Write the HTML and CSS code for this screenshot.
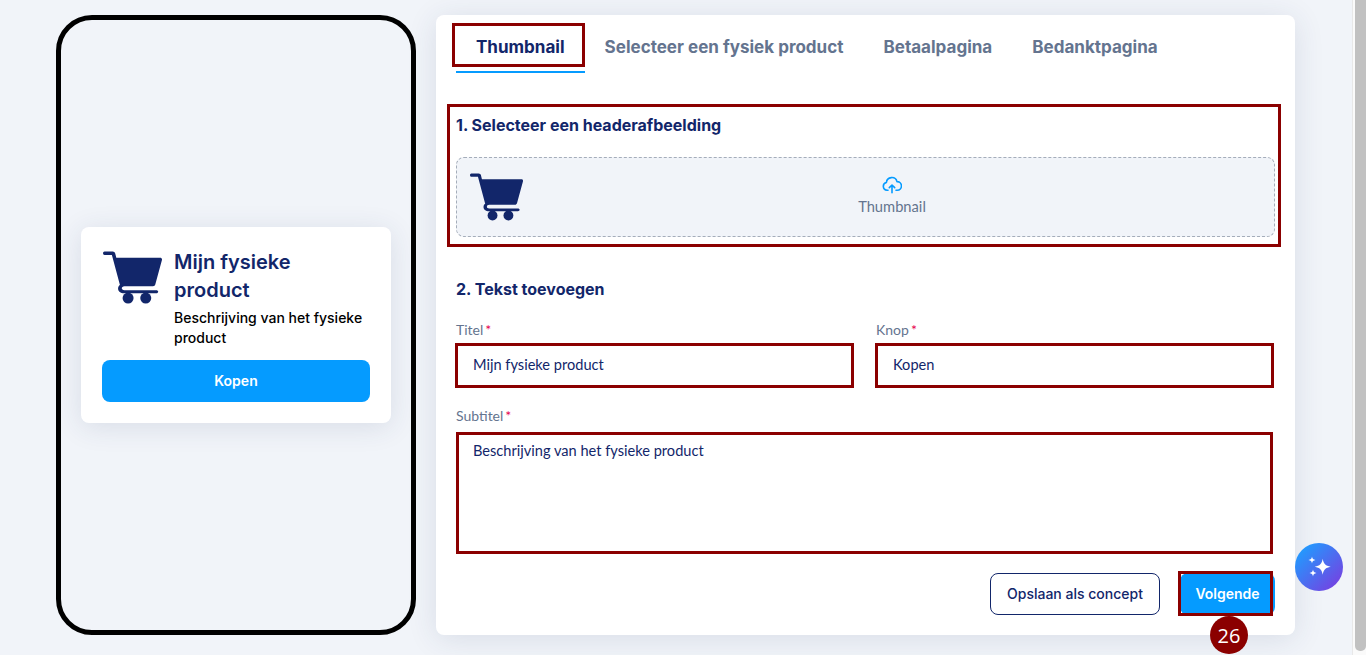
FILE: index.html
```html
<!DOCTYPE html>
<html lang="nl">
<head>
<meta charset="utf-8">
<title>Thumbnail</title>
<link rel="stylesheet" href="styles.css">
</head>
<body>
<svg class="defs" width="0" height="0" aria-hidden="true">
  <symbol id="cart" viewBox="0 0 60 54">
    <path d="M1.500 .5h8.300c1.300 0 2.300.8 2.600 2l1.100 4.500h44.800c1.200 0 2 1 1.700 2.200l-6.800 25c-.3 1-1.200 1.700-2.300 1.700H21l.8 0c-1.800 0-2.700 1-2.700 2.100 0 1 .9 1.900 2.700 1.900h32.400c1.100 0 2 .7 2 1.600s-.9 1.600-2 1.600H21.500c-3.800 0-6.200-2.100-6.200-4.900 0-1.500.7-2.800 1.900-3.500L9 4H1.500C.6 4 0 3.200 0 2.300S.6.500 1.500.5z" fill="#12266a"/>
    <circle cx="25.500" cy="48" r="5.600" fill="#12266a"/>
    <circle cx="43.500" cy="48" r="5.600" fill="#12266a"/>
  </symbol>
</svg>
<main class="page">
  <section class="phone">
    <article class="card">
      <div class="card-top">
        <svg class="cart-lg"><use href="#cart"/></svg>
        <div class="card-copy">
          <h2 class="card-title">Mijn fysieke product</h2>
          <p class="card-desc">Beschrijving van het fysieke product</p>
        </div>
      </div>
      <div class="card-btn">Kopen</div>
    </article>
  </section>
  <section class="panel">
    <nav class="tabs">
      <div class="tab active">Thumbnail<span class="mark mark-tab"></span></div>
      <div class="tab">Selecteer een fysiek product</div>
      <div class="tab">Betaalpagina</div>
      <div class="tab">Bedanktpagina</div>
    </nav>
    <div class="sec-one">
      <span class="mark mark-sec"></span>
      <h3 class="sec-title">1. Selecteer een headerafbeelding</h3>
      <div class="drop">
        <svg class="cart-sm"><use href="#cart"/></svg>
        <div class="drop-mid">
          <svg class="cloud" viewBox="0 0 20 18" fill="none" stroke="#059bff" stroke-width="1.600" stroke-linecap="round" stroke-linejoin="round">
            <path d="M6 14.200H5a3.900 3.900 0 0 1-.6-7.700A5.400 5.400 0 0 1 15 5.600a4.300 4.300 0 0 1 .3 8.600H14"/>
            <path d="M10 16.800V9.200M7.300 11.600 10 9l2.700 2.600"/>
          </svg>
          <span class="drop-label">Thumbnail</span>
        </div>
      </div>
    </div>
    <h3 class="sec-title sec-two">2. Tekst toevoegen</h3>
    <div class="row">
      <div class="field">
        <label class="label">Titel<span class="req">*</span></label>
        <div class="input">Mijn fysieke product<span class="mark"></span></div>
      </div>
      <div class="field">
        <label class="label">Knop<span class="req">*</span></label>
        <div class="input">Kopen<span class="mark"></span></div>
      </div>
    </div>
    <div class="field field-sub">
      <label class="label">Subtitel<span class="req">*</span></label>
      <div class="input area">Beschrijving van het fysieke product<span class="mark"></span></div>
    </div>
    <div class="actions">
      <div class="btn btn-ghost">Opslaan als concept</div>
      <div class="btn btn-next">Volgende<span class="mark mark-next"></span><span class="badge">26</span></div>
    </div>
  </section>
</main>
<div class="fab">
  <svg viewBox="0 0 24 24" width="24" height="24" fill="#fff">
    <path d="M15.700 3.700c.9 5.200 2.800 7.100 8 8-5.200.9-7.100 2.800-8 8-.9-5.200-2.800-7.100-8-8 5.200-.9 7.100-2.800 8-8z"/>
    <path d="M5 1.500c.4 2.300 1.200 3.100 3.500 3.500C6.200 5.400 5.400 6.200 5 8.500 4.600 6.200 3.800 5.400 1.500 5 3.800 4.600 4.600 3.800 5 1.500z"/>
    <path d="M6 14.500c.4 2.300 1.200 3.100 3.500 3.500-2.300.4-3.100 1.200-3.500 3.500-.4-2.300-1.200-3.100-3.500-3.500 2.300-.4 3.100-1.200 3.500-3.500z"/>
  </svg>
</div>
<div class="scrollbar"><div class="thumb"></div></div>
</body>
</html>
```
FILE: styles.css
```css
* { box-sizing: border-box; }
html, body { margin: 0; height: 100%; overflow: hidden; }
body { background: #f1f4f9; font-family: "Inter", "Liberation Sans", sans-serif; color: #12266a; }
.defs { position: absolute; }
h2, h3, p { margin: 0; }

.page { display: flex; gap: 20px; padding: 15px 0 0 56px; align-items: flex-start; }

.phone {
  width: 360px; height: 620px; border: 5px solid #000; border-radius: 36px;
  display: flex; align-items: center; justify-content: center;
}
.card {
  width: 310px; height: 196px; background: #fff; border-radius: 8px; padding: 21px;
  box-shadow: 0 4px 28px rgba(40, 60, 100, .12); display: flex; flex-direction: column;
}
.card-top { display: flex; gap: 12px; flex: 1; }
.cart-lg { width: 59px; height: 53px; flex: none; margin: 3px 0 0 1px; }
.card-title { font-size: 20px; font-weight: 600; line-height: 28px; }
.card-desc { font-size: 14px; font-weight: 500; line-height: 20px; color: #000; margin-top: 4px; }
.card-btn {
  height: 42px; background: #059bff; border-radius: 8px; color: #fff; font-size: 14px; font-weight: 600;
  display: flex; align-items: center; justify-content: center; padding-bottom: 2px;
}

.panel {
  width: 859px; height: 620px; background: #fff; border-radius: 8px; padding: 0 20px;
  box-shadow: 0 4px 30px rgba(40, 60, 100, .12); position: relative;
}
.tabs { display: flex; height: 58px; }
.tab {
  padding: 0 20px; height: 58px; font-size: 17.04px; font-weight: 700; color: #64748f; line-height: 64px; position: relative;
}
.tab.active { color: #12266a; border-bottom: 2px solid #059bff; }

.mark { position: absolute; inset: -2px; border: 3px solid #8b0000; pointer-events: none; }
.mark-tab { inset: 8px 0 4px -4px; }
.mark-sec { inset: 0 -6px 0 -9px; }
.mark-next { inset: -2px 2px -1px -2px; }

.sec-one { position: relative; margin-top: 31px; height: 143px; padding-top: 11px; }
.sec-title { font-size: 16px; font-weight: 700; line-height: 20px; }
.drop {
  margin-top: 22px; height: 80px; background: #f1f4f9; border: 1px dashed #a5adba; border-radius: 8px;
  display: flex; align-items: center; padding: 0 13px; position: relative;
}
.cart-sm { width: 53px; height: 48px; flex: none; }
.drop-mid { position: absolute; inset: 0; display: flex; flex-direction: column; align-items: center; justify-content: center; gap: 3px; padding: 0 0 2px 53px; }
.cloud { width: 20px; height: 18px; margin-top: -2px; }
.drop-label { font-family: "Lato", sans-serif; font-size: 14.7px; color: #64748f; line-height: 18px; }

.sec-two { margin-top: 32px; }
.row { display: flex; gap: 22px; margin-top: 22px; }
.field { width: 398px; }
.field-sub { width: 817px; margin-top: 21px; }
.label { display: block; font-family: "Lato", sans-serif; font-size: 14px; color: #64748f; line-height: 18px; }
.req { color: #e6004d; margin-left: 2px; }
.input {
  position: relative; margin-top: 6px; height: 41px; padding: 0 17px; background: #fff;
  font-family: "Lato", sans-serif; font-size: 14.6px; line-height: 39px; color: #12266a;
}
.input .mark { inset: -2px 0 -2px -1px; }
.area { margin-top: 8px; height: 121px; line-height: 20px; padding-top: 8px; }
.area .mark { inset: -1px 0 0 0; }

.actions { display: flex; justify-content: flex-end; gap: 20px; margin-top: 19px; }
.btn {
  height: 42px; border-radius: 8px; font-size: 14px; font-weight: 600; padding-bottom: 2px;
  display: flex; align-items: center; justify-content: center; position: relative;
}
.btn-ghost { width: 170px; border: 1px solid #12266a; color: #12266a; background: #fff; font-weight: 500; }
.btn-next { width: 95px; background: #059bff; color: #fff; }
.badge {
  position: absolute; left: 30px; top: 43px; width: 38px; height: 38px; border-radius: 50%;
  background: #8b0000; color: #fff; font-family: "Open Sans", sans-serif; font-size: 20px; font-weight: 400;
  display: flex; align-items: center; justify-content: center;
}

.fab {
  position: fixed; left: 1295px; top: 543px; width: 48px; height: 48px; border-radius: 50%;
  background: linear-gradient(135deg, #1f9dff 10%, #7a3ce0 95%);
  display: flex; align-items: center; justify-content: center;
}
.scrollbar { position: fixed; right: 0; top: 0; bottom: 0; width: 14px; background: #fafafa; border-left: 1px solid #e8e8e8; padding-left: 2px; }
.thumb { height: 651px; background: #c1c1c1; border-radius: 0 0 5px 5px; }
```
